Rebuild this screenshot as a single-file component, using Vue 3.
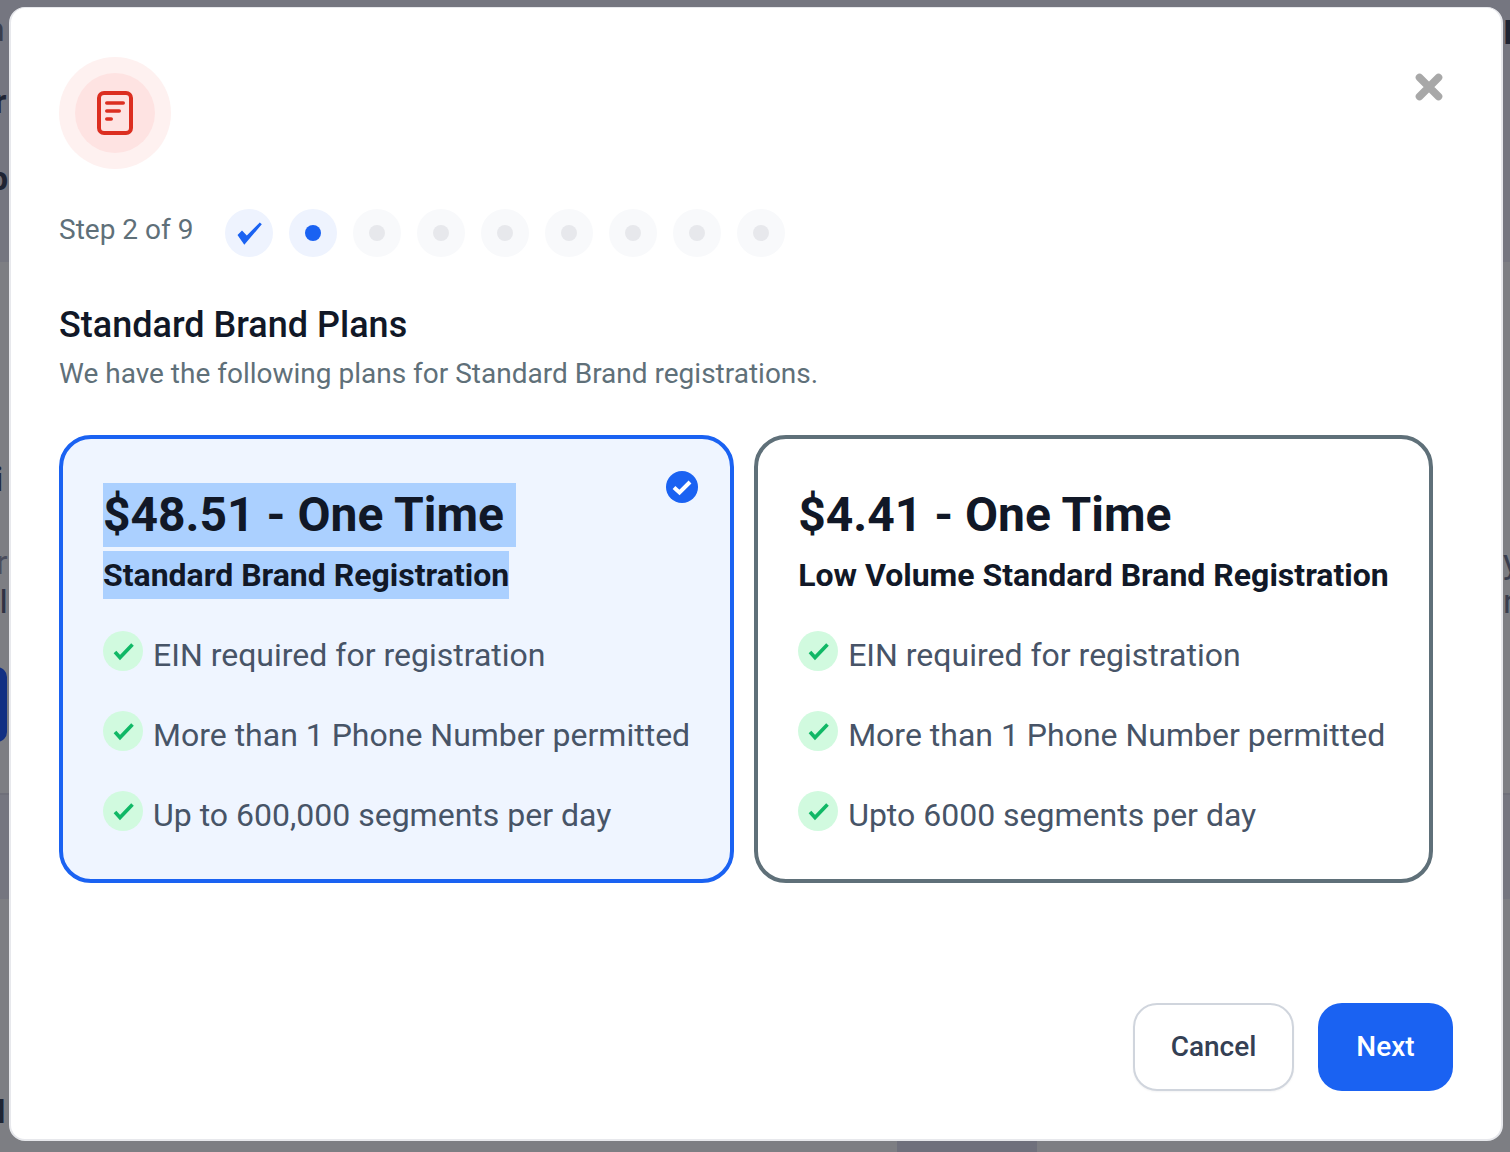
<script setup>
const steps = ['done', 'current', 'todo', 'todo', 'todo', 'todo', 'todo', 'todo', 'todo']
const plans = [
  {
    price: '$48.51 - One Time',
    name: 'Standard Brand Registration',
    selected: true,
    features: ['EIN required for registration', 'More than 1 Phone Number permitted', 'Up to 600,000 segments per day'],
  },
  {
    price: '$4.41 - One Time',
    name: 'Low Volume Standard Brand Registration',
    selected: false,
    features: ['EIN required for registration', 'More than 1 Phone Number permitted', 'Upto 6000 segments per day'],
  },
]
</script>

<template>
  <div class="page">
    <div class="backdrop" aria-hidden="true">
      <div class="band b1"></div>
      <div class="band b2"></div>
      <div class="band b3"></div>
      <span class="ghost g1">n</span>
      <span class="ghost g2">r</span>
      <span class="ghost g3">p</span>
      <span class="ghost g4">i</span>
      <span class="ghost g5">r</span>
      <span class="ghost g6">I</span>
      <span class="ghost g7">I</span>
      <span class="ghost g8">y</span>
      <span class="ghost g9">r</span>
      <span class="ghost g10">I</span>
      <div class="ghost-btn"></div>
    </div>

    <section class="modal">
      <header class="top">
        <div class="badge">
          <div class="badge-inner">
            <svg width="38" height="46" viewBox="0 0 38 46" fill="none">
              <rect x="3" y="3" width="32" height="40" rx="5" stroke="#dc2e20" stroke-width="4" />
              <path d="M10.75 13h16.5M10.75 21h12.5M10.75 29h4.5" stroke="#dc2e20" stroke-width="3.5" stroke-linecap="round" />
            </svg>
          </div>
        </div>
        <button class="close" aria-label="Close">
          <svg width="30" height="30" viewBox="0 0 30 30" fill="none">
            <path d="M5.5 5.5l19 19M24.5 5.5l-19 19" stroke="#a8a8a8" stroke-width="7.6" stroke-linecap="round" />
          </svg>
        </button>
      </header>

      <div class="stepper">
        <span class="step-label">Step 2 of 9</span>
        <div class="steps">
          <div v-for="(s, i) in steps" :key="i" class="step" :class="s">
            <svg v-if="s === 'done'" width="26" height="24" viewBox="0 0 26 24">
              <path d="M1.5 14L6 9.6l4.8 4.9L23.8 1.6l2 1.6L8.3 23.8z" fill="#1a62f2" />
            </svg>
            <span v-else class="dot"></span>
          </div>
        </div>
      </div>

      <h2 class="heading">Standard Brand Plans</h2>
      <p class="desc">We have the following plans for Standard Brand registrations.</p>

      <div class="plans">
        <article v-for="p in plans" :key="p.price" class="plan" :class="{ selected: p.selected }">
          <svg v-if="p.selected" class="tick" width="32" height="32" viewBox="0 0 32 32">
            <circle cx="16" cy="16" r="16" fill="#1a62f2" />
            <path d="M8 16.5l5.5 5L24 11" fill="none" stroke="#fff" stroke-width="4" />
          </svg>
          <div class="price"><span class="price-text">{{ p.price }}</span></div>
          <div class="name"><span class="name-text">{{ p.name }}</span></div>
          <ul class="features">
            <li v-for="f in p.features" :key="f" class="feature">
              <span class="check">
                <svg width="22" height="20" viewBox="0 0 22 20" fill="none">
                  <path d="M3 11l5 5.5L20.5 3.5" stroke="#10b866" stroke-width="3.6" />
                </svg>
              </span>
              <span>{{ f }}</span>
            </li>
          </ul>
        </article>
      </div>

      <footer class="actions">
        <button class="btn cancel">Cancel</button>
        <button class="btn next">Next</button>
      </footer>
    </section>
  </div>
</template>

<style>
html, body { margin: 0; }
</style>

<style scoped>
.page {
  position: relative;
  width: 1510px;
  height: 1152px;
  overflow: hidden;
  background: #7d7e83;
  font-family: Roboto, "Liberation Sans", sans-serif;
  padding: 7px 7px 11px 9px;
  box-sizing: border-box;
}
.backdrop { position: absolute; inset: 0; }
.band { position: absolute; background: #757680; }
.b1 { left: 0; right: 0; top: 0; height: 262px; }
.b2 { left: 0; right: 0; top: 793px; height: 106px; border-top: 2px solid #6f707a; box-sizing: border-box; }
.b3 { left: 897px; width: 140px; top: 1141px; height: 11px; background: #6f707c; }
.ghost {
  position: absolute;
  font-size: 34px;
  line-height: 30px;
  color: #2a2e3f;
}
.g1 { left: -14px; top: 14px; color: #3a3e4e; }
.g2 { left: -6px; top: 86px; font-weight: 700; color: #1f2433; }
.g3 { left: -11px; top: 163px; font-weight: 700; color: #1f2433; }
.g4 { left: -6px; top: 464px; font-weight: 700; color: #1f2433; }
.g5 { left: -4px; top: 547px; color: #4a4d5c; }
.g6 { left: -1px; top: 586px; color: #2f3345; }
.g7 { left: -4px; top: 1096px; font-weight: 700; color: #1f2433; }
.g8 { left: 1503px; top: 546px; color: #3a3e4e; }
.g9 { left: 1503px; top: 586px; color: #3a3e4e; }
.g10 { left: 1503px; top: 17px; font-weight: 700; color: #1f2433; }
.ghost-btn {
  position: absolute;
  left: -30px;
  top: 667px;
  width: 37px;
  height: 75px;
  border-radius: 10px;
  background: #123083;
}

.modal {
  position: relative;
  box-sizing: border-box;
  width: 1494px;
  height: 1134px;
  padding: 48px;
  background: #fff;
  border: 2px solid #e7e8ec;
  border-top-width: 1px;
  border-radius: 16px;
  display: flex;
  flex-direction: column;
}
.top {
  display: flex;
  justify-content: space-between;
  align-items: flex-start;
  height: 112px;
  margin-top: 1px;
}
.badge {
  width: 112px;
  height: 112px;
  border-radius: 50%;
  background: #fef1f0;
  display: flex;
  align-items: center;
  justify-content: center;
}
.badge-inner {
  width: 80px;
  height: 80px;
  border-radius: 50%;
  background: #fee3e2;
  display: flex;
  align-items: center;
  justify-content: center;
}
.close {
  border: 0;
  padding: 0;
  background: none;
  width: 30px;
  height: 30px;
  margin-top: 15px;
  margin-right: 9px;
}
.stepper {
  display: flex;
  align-items: flex-start;
  margin-top: 40px;
}
.step-label {
  font-size: 28px;
  line-height: 42px;
  color: #5f7079;
  width: 166px;
}
.steps { display: flex; gap: 16px; }
.step {
  width: 48px;
  height: 48px;
  border-radius: 50%;
  display: flex;
  align-items: center;
  justify-content: center;
  background: #f8f9fb;
}
.step.done, .step.current { background: #eef3fe; }
.dot { width: 16px; height: 16px; border-radius: 50%; background: #e7e8ec; }
.current .dot { background: #1a62f2; }
.heading {
  margin: 44px 0 0;
  font-size: 36px;
  line-height: 48px;
  font-weight: 500;
  color: #111827;
}
.desc {
  margin: 4px 0 0;
  font-size: 28px;
  line-height: 42px;
  color: #5f7079;
}
.plans {
  display: flex;
  gap: 20px;
  margin-top: 40px;
  align-items: stretch;
}
.plan {
  position: relative;
  box-sizing: border-box;
  border: 4px solid #5f7079;
  border-radius: 32px;
  padding: 44px 40px 40px 40px;
}
.plan.selected {
  border-color: #1a62f2;
  background: #eff5ff;
}
.tick { position: absolute; top: 32px; right: 32px; }
.price { height: 64px; }
.price-text {
  display: inline-block;
  font-size: 48px;
  line-height: 64px;
  font-weight: 700;
  color: #111827;
  white-space: pre;
}
.selected .price-text { background: #abd0ff; padding-right: 12px; }
.name { margin-top: 4px; height: 48px; }
.name-text {
  display: inline-block;
  font-size: 32px;
  line-height: 48px;
  font-weight: 700;
  color: #111827;
  white-space: nowrap;
}
.selected .name-text { background: #abd0ff; }
.features {
  list-style: none;
  margin: 32px 0 0;
  padding: 0;
  display: flex;
  flex-direction: column;
  gap: 32px;
}
.feature {
  display: flex;
  align-items: flex-start;
  gap: 10px;
  font-size: 32px;
  line-height: 48px;
  color: #475467;
  white-space: nowrap;
}
.check {
  width: 40px;
  height: 40px;
  border-radius: 50%;
  background: #d1fadf;
  display: flex;
  align-items: center;
  justify-content: center;
  flex: none;
}
.actions {
  margin-top: auto;
  display: flex;
  justify-content: flex-end;
  gap: 24px;
}
.btn {
  height: 88px;
  border-radius: 24px;
  font-family: inherit;
  font-size: 28px;
  font-weight: 500;
  box-sizing: border-box;
  padding: 0 0 2px;
}
.cancel {
  width: 161px;
  background: #fff;
  border: 2px solid #d0d5dd;
  color: #344054;
  box-shadow: 0 1px 2px rgba(16, 24, 40, 0.05);
}
.next {
  width: 135px;
  background: #1a62f2;
  border: 0;
  color: #fff;
}
</style>
